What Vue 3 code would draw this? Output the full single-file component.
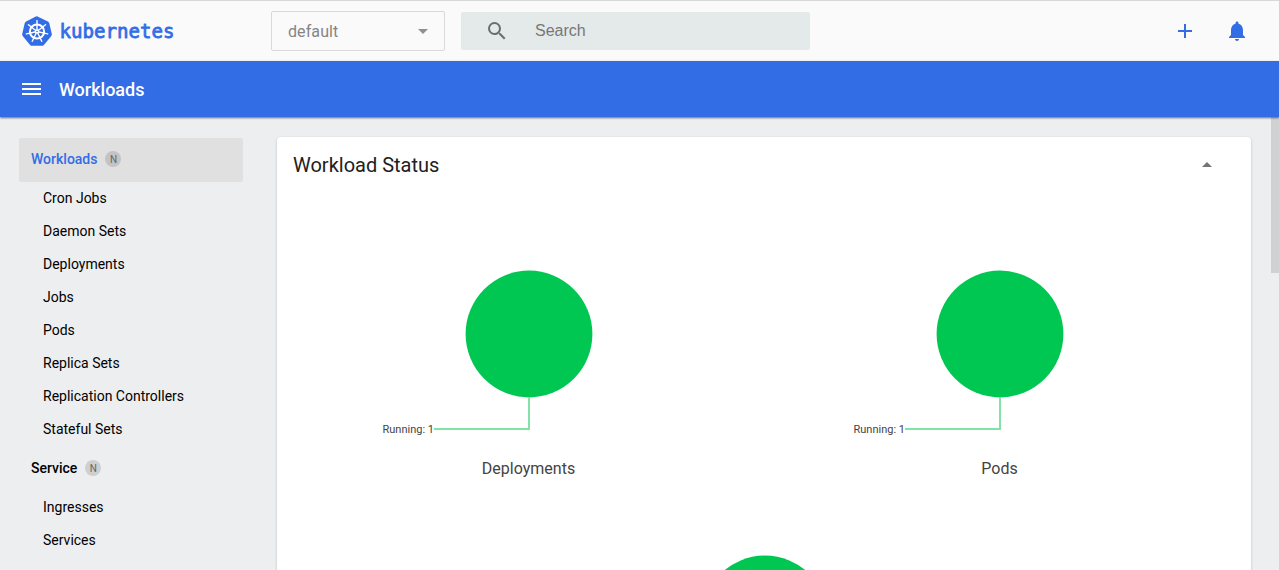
<script setup>
const groups = [
  {
    name: 'Workloads',
    active: true,
    items: ['Cron Jobs', 'Daemon Sets', 'Deployments', 'Jobs', 'Pods', 'Replica Sets', 'Replication Controllers', 'Stateful Sets'],
  },
  { name: 'Service', active: false, items: ['Ingresses', 'Services'] },
]
const charts = [
  { id: 1, name: 'Deployments', label: 'Running: 1' },
  { id: 2, name: 'Pods', label: 'Running: 1' },
  { id: 3 },
]
const spokes = [0, 1, 2, 3, 4, 5, 6].map((i) => (i * 360) / 7)
</script>

<template>
  <div class="app">
    <header class="top">
      <svg class="logo" width="160" height="32" viewBox="0 0 160 32">
        <path
          d="M15 1.2 L25.9 6.5 Q27 7 27.3 8.2 L29.8 19 Q30 20.2 29.3 21.1 L21.9 29.9 Q21.1 30.8 20 30.8 H10 Q8.9 30.8 8.1 29.9 L.7 21.1 Q0 20.2 .2 19 L2.7 8.2 Q3 7 4.1 6.5 L13.8 1.6 Q15 1 16.2 1.6Z"
          fill="#326de6"
        />
        <g stroke="#fff" fill="none">
          <circle cx="15" cy="16.5" r="7.1" stroke-width="2" />
          <path
            v-for="a in spokes"
            :key="a"
            d="M15 14.5V5.6"
            stroke-width="1.4"
            stroke-linecap="round"
            :transform="`rotate(${a} 15 16.5)`"
          />
        </g>
        <circle cx="15" cy="16.5" r="2.3" fill="#fff" />
        <circle cx="15" cy="16.5" r=".8" fill="#326de6" />
        <text x="37.4" y="23.2" textLength="115" lengthAdjust="spacingAndGlyphs" class="wordmark">kubernetes</text>
      </svg>
      <div class="select">
        <span>default</span>
        <i class="caret"></i>
      </div>
      <div class="search">
        <svg width="24" height="24" viewBox="0 0 24 24" fill="#6b6e6e">
          <path d="M15.5 14h-.79l-.28-.27A6.471 6.471 0 0 0 16 9.5 6.5 6.5 0 1 0 9.5 16c1.61 0 3.09-.59 4.23-1.57l.27.28v.79l5 4.99L20.49 19l-4.99-5zm-6 0C7.01 14 5 11.99 5 9.5S7.01 5 9.5 5 14 7.01 14 9.5 11.99 14 9.5 14z" />
        </svg>
        <span>Search</span>
      </div>
      <div class="actions">
        <svg width="24" height="24" viewBox="0 0 24 24"><path d="M19 13h-6v6h-2v-6H5v-2h6V5h2v6h6v2z" /></svg>
        <svg width="24" height="24" viewBox="0 0 24 24">
          <path d="M12 22c1.1 0 2-.9 2-2h-4c0 1.1.9 2 2 2zm6-6v-5c0-3.07-1.63-5.64-4.5-6.32V4c0-.83-.67-1.5-1.5-1.5s-1.5.67-1.5 1.5v.68C7.64 5.36 6 7.92 6 11v5l-2 2v1h16v-1l-2-2z" />
        </svg>
      </div>
    </header>

    <div class="bar">
      <svg width="24" height="24" viewBox="0 0 24 24" fill="#fff"><path d="M3 18h19v-2H3v2zm0-5h19v-2H3v2zm0-7v2h19V6H3z" /></svg>
      <h1>Workloads</h1>
    </div>

    <div class="body">
      <nav>
        <section v-for="g in groups" :key="g.name">
          <div class="group" :class="{ active: g.active }">
            <span>{{ g.name }}</span>
            <b class="badge">N</b>
          </div>
          <a v-for="item in g.items" :key="item">{{ item }}</a>
        </section>
      </nav>

      <main>
        <div class="card">
          <div class="card-head">
            <h2>Workload Status</h2>
            <i class="caret up"></i>
          </div>
          <div class="charts">
            <figure v-for="c in charts" :key="c.id">
              <svg width="401" height="250" viewBox="0 0 401 250">
                <circle cx="201" cy="134" r="63.4" fill="#00c752" />
                <path v-if="c.label" d="M201 197.500V229H106" fill="none" stroke="#80e3a8" stroke-width="2" />
                <text v-if="c.label" x="54.5" y="233" class="label">{{ c.label }}</text>
              </svg>
              <figcaption v-if="c.name">{{ c.name }}</figcaption>
            </figure>
          </div>
        </div>
      </main>
      <div class="track"><div class="thumb"></div></div>
    </div>
  </div>
</template>

<style>
body {
  overflow: hidden;
}
</style>

<style scoped>
.app {
  display: flex;
  flex-direction: column;
  box-sizing: border-box;
  height: 570px;
  overflow: hidden;
  border-top: 1px solid #d8d8d8;
  background: #edeef0;
  font-family: Roboto, "Liberation Sans", sans-serif;
  color: #000;
}
.top {
  flex: none;
  display: flex;
  align-items: center;
  box-sizing: border-box;
  height: 60px;
  padding: 0 30px 0 22px;
  background: #fafafa;
}
.logo {
  flex: none;
  margin: 0 89px 1px 0;
}
.wordmark {
  font: 20px "DejaVu Sans Mono", monospace;
  fill: #326de6;
  stroke: #326de6;
  stroke-width: 0.8px;
  stroke-linejoin: round;
}
.select {
  display: flex;
  align-items: center;
  justify-content: space-between;
  box-sizing: border-box;
  width: 174px;
  height: 40px;
  padding: 0 16px;
  border: 1px solid #d9d9d9;
  border-radius: 2px;
  font-size: 16px;
  letter-spacing: 0.1px;
  color: #858585;
}
.caret {
  width: 0;
  height: 0;
  margin-top: 1px;
  border: 5px solid transparent;
  border-top-color: #909090;
  border-bottom: 0;
}
.caret.up {
  margin-top: 0;
  margin-bottom: 2px;
  border-top: 0;
  border-bottom: 5px solid #757575;
}
.search {
  display: flex;
  align-items: center;
  box-sizing: border-box;
  width: 349px;
  height: 38px;
  margin-left: 16px;
  padding-left: 24px;
  border-radius: 2px;
  background: #e4e9e9;
  font: 16px "Liberation Sans", sans-serif;
  color: #777;
}
.search span {
  margin: 0 0 1px 26px;
}
.actions {
  display: flex;
  gap: 28px;
  margin-left: auto;
  fill: #326de6;
}
.bar {
  flex: none;
  display: flex;
  align-items: center;
  height: 56px;
  padding-left: 19px;
  background: #326de6;
  box-shadow: 0 1px 2px rgba(0, 0, 0, 0.55);
  z-index: 1;
}
h1 {
  margin: 0 0 0 16px;
  font-size: 18px;
  font-weight: 500;
  color: #fff;
}
.body {
  flex: 1;
  display: flex;
  min-height: 0;
}
nav {
  width: 224px;
  padding: 21px 34px 0 19px;
}
.group {
  display: flex;
  align-items: center;
  box-sizing: border-box;
  height: 45px;
  padding: 0 12px 2px;
  font-size: 14px;
  font-weight: 500;
}
.group.active {
  height: 44px;
  border-radius: 2px;
  background: #e0e0e0;
  color: #326de6;
}
.badge {
  width: 16px;
  height: 16px;
  margin-left: 8px;
  border-radius: 50%;
  background: rgba(0, 0, 0, 0.13);
  font-size: 10px;
  font-weight: 400;
  line-height: 17px;
  text-align: center;
  color: #666;
}
nav a {
  display: block;
  padding-left: 24px;
  font-size: 14px;
  line-height: 33px;
}
main {
  flex: 1;
  padding: 20px 20px 0 0;
}
.card {
  height: 900px;
  border-radius: 4px;
  background: #fff;
  box-shadow: 0 1px 3px rgba(0, 0, 0, 0.2);
}
.card-head {
  display: flex;
  align-items: center;
  justify-content: space-between;
  height: 56px;
  padding: 0 39px 0 16px;
}
h2 {
  margin: 0;
  font-size: 20px;
  font-weight: 400;
  color: #212121;
}
.charts {
  display: flex;
  flex-wrap: wrap;
  justify-content: center;
  padding: 7px 16px;
}
figure {
  width: 471px;
  height: 285px;
  margin: 0;
  text-align: center;
}
figure svg {
  display: block;
  margin: 0 auto;
}
.label {
  font-size: 11px;
  fill: #444;
}
figcaption {
  font-size: 16px;
  line-height: 38px;
  color: #444;
}
.track {
  width: 8px;
}
.thumb {
  height: 156px;
  background: #d0d1d3;
}
</style>
